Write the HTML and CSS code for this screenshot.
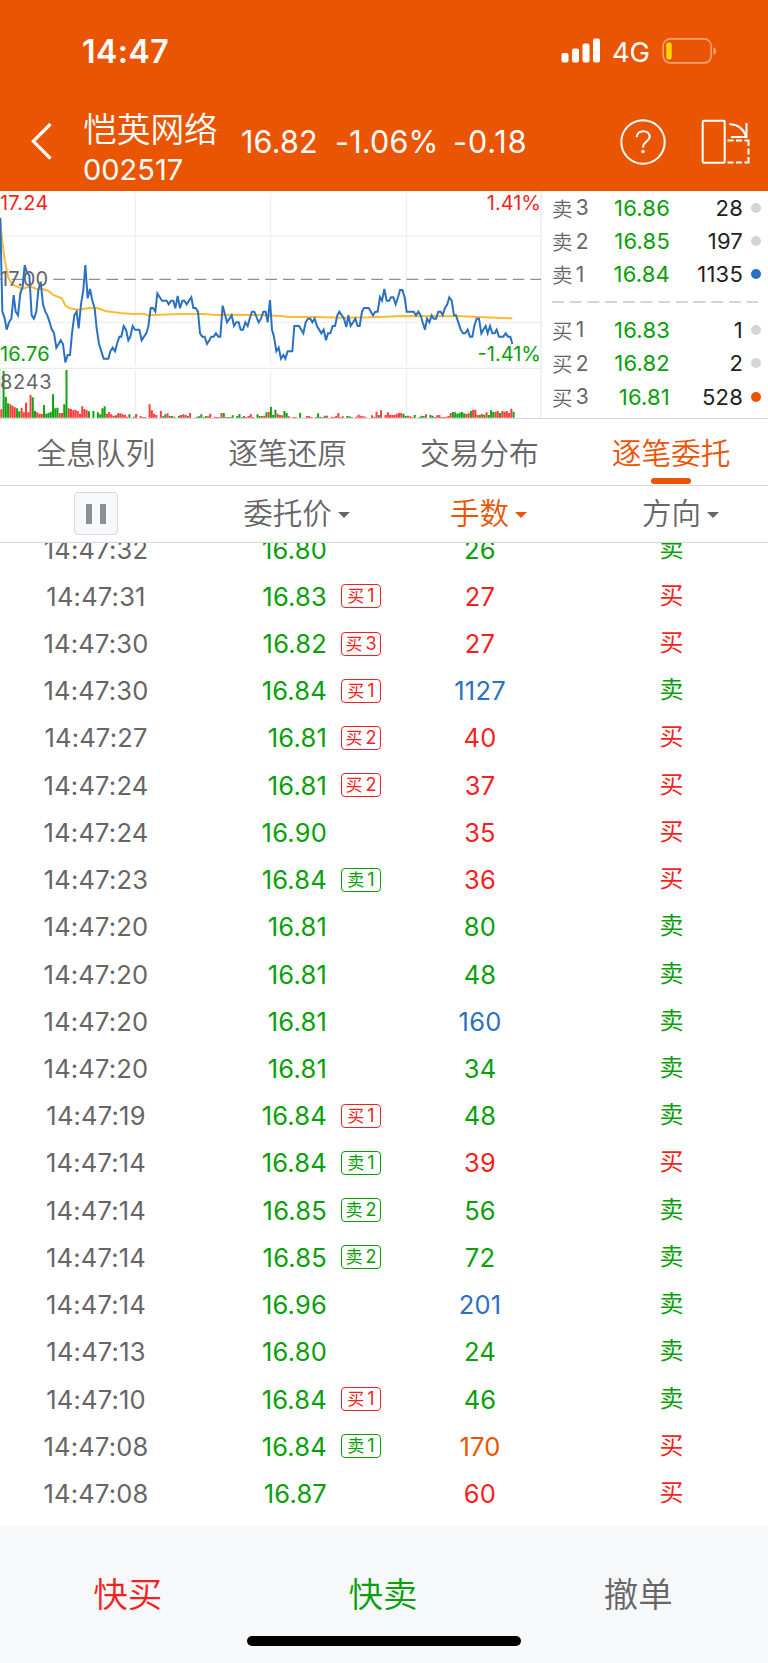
FILE: index.html
```html
<!DOCTYPE html>
<html lang="zh-CN">
<head>
<meta charset="utf-8">
<title>恺英网络 002517</title>
<link rel="stylesheet" href="styles.css">
</head>
<body>
<header class="top">
  <div class="status">
    <span class="clock">14:47</span>
    <svg class="signal" width="40" height="26" viewBox="0 0 40 26" fill="#fff"><rect x="0.5" y="15" width="7" height="9.5" rx="2"/><rect x="11" y="10.5" width="7" height="14" rx="2"/><rect x="21.5" y="5.5" width="7" height="19" rx="2"/><rect x="32" y="0.5" width="7" height="24" rx="2"/></svg>
    <span class="net">4G</span>
    <svg class="battery" width="56" height="28" viewBox="0 0 56 28"><rect x="1.2" y="1.9" width="48" height="24" rx="7" fill="none" stroke="#f5a273" stroke-width="1.6"/><rect x="4.3" y="5.5" width="5.4" height="17" rx="2" fill="#ffd60a"/><path d="M51.5 10v8q2.600-1 2.600-4t-2.600-4z" fill="#f5a273"/></svg>
  </div>
  <div class="nav">
    <svg class="back" width="24" height="38" viewBox="0 0 24 38" fill="none" stroke="#fff" stroke-width="3.200"><path d="M20.500 2 3.300 19.300 20.500 36.500"/></svg>
    <div class="stock"><div class="name">恺英网络</div><div class="code">002517</div></div>
    <div class="quote"><span class="q1">16.82</span><span class="q2">-1.06%</span><span class="q3">-0.18</span></div>
    <svg class="help" width="46" height="46" viewBox="0 0 46 46" fill="none" stroke="#fff" stroke-width="2"><circle cx="23" cy="23" r="21.700"/><path d="M16.700 18.300C16.700 10.400 29.700 10.200 29.700 17.700C29.700 22.400 23 22.300 23 28.500" stroke-width="2.100"/><circle cx="23" cy="32.500" r="1.700" fill="#fff" stroke="none"/></svg>
    <svg class="rotate" width="49" height="46" viewBox="0 0 49 46" fill="none" stroke="#fff" stroke-width="2"><rect x="1.700" y="1.700" width="22" height="42" rx="1.200"/><path d="M28.300 5q13.500.8 17 13.200M45.500 4v14H30"/><path d="M26.500 21.600h6m2.500 0h6m2.500 0h4v5.500m0 2.500v6m0 2.500v5.500h-4m-2.500 0h-6m-2.500 0h-6"/></svg>
  </div>
</header>
<section class="market">
  <div class="chart">
    <svg width="543" height="228" viewBox="0 0 1629 684" fill="none">
      <g transform="translate(0 -18)">
        <path d="M0 153H1623M0 412H1623M406 24V542M812 24V542M1219 24V542M406 555V698M812 555V698M1219 555V698" stroke="#eaebf1" stroke-width="3"/>
        <path d="M0 550H1623M1623 18V700M1 550V700" stroke="#e4e4ea" stroke-width="3"/>
        <path d="M160 283H1623" stroke="#8e8e93" stroke-width="4" stroke-dasharray="35 18"/>
        <path d="M0 283h8M35 283h38" stroke="#8e8e93" stroke-width="4"/>
        <path id="vr" stroke="#fa3e3c" stroke-width="6"/><path id="vg" stroke="#12a310" stroke-width="6"/>
        <path stroke="#ffb932" stroke-width="6" d="M1 110 7 170 14 225 25 278 36 298 50 304 66 312 90 304 110 312 130 313 146 318 160 330 185 340 197 362 210 370 232 374 270 369 295 370 315 378 360 384 400 387 430 386 445 391 480 389 540 387 610 387 650 390 700 389 780 390 840 393 870 396 940 396 1030 398 1110 397 1160 395 1210 393 1390 394 1450 397 1510 399 1537 400"/>
        <path stroke="#2b71c2" stroke-width="6" d="M1 98 3 200 7 380 14 400 20 434 27 412 34 401 41 330 47 380 54 391 61 325 68 305 74 240 80 261 88 271 95 391 102 401 109 380 115 315 122 290 129 358 136 380 142 391 149 412 155 432 162 444 169 488 176 477 182 466 189 477 196 532 203 510 210 510 216 445 223 391 230 380 236 430 243 358 250 315 256 240 263 340 270 312 277 347 284 370 290 430 297 477 304 499 311 521 325 521 331 499 338 488 345 499 351 477 358 455 364 455 371 423 378 434 385 466 391 455 398 423 405 434 418 434 425 466 432 455 439 445 445 425 452 369 459 369 466 380 472 325 486 347 500 347 506 358 513 347 520 347 526 370 533 333 540 370 547 347 553 347 560 358 567 347 574 337 580 369 587 369 594 380 600 445 607 455 614 455 621 477 628 466 634 455 641 455 648 445 655 455 661 455 668 362 681 412 695 391 702 423 709 412 716 412 722 434 729 434 736 412 743 423 749 401 756 380 763 380 776 412 783 401 790 380 797 380 803 412 810 345 816 434 822 455 829 499 836 488 843 521 850 510 856 521 863 499 877 499 883 423 897 423 910 445 917 412 924 401 931 401 937 412 944 401 951 423 964 445 971 434 978 466 984 445 991 445 998 423 1005 423 1012 391 1018 380 1032 401 1039 426 1045 391 1052 423 1066 401 1073 423 1079 423 1086 380 1092 369 1106 369 1119 391 1126 380 1133 380 1140 336 1146 347 1153 312 1160 347 1167 347 1173 337 1180 337 1187 358 1194 337 1200 315 1207 315 1214 337 1220 380 1241 380 1248 391 1255 380 1262 391 1268 412 1275 434 1281 401 1288 412 1295 391 1301 401 1308 401 1315 380 1322 380 1328 391 1335 369 1342 358 1348 337 1355 347 1362 391 1368 391 1382 434 1389 445 1396 445 1403 434 1410 455 1417 455 1423 423 1430 401 1437 401 1444 445 1450 434 1457 423 1463 445 1470 423 1477 445 1484 445 1490 434 1497 455 1510 455 1517 445 1524 455 1531 455 1537 477"/>
      </g>
    </svg>
    <span class="lab hi">17.24</span><span class="lab mid">17.00</span><span class="lab lo">16.76</span><span class="lab vol">8243</span>
    <span class="lab hip">1.41%</span><span class="lab lop">-1.41%</span>
  </div>
  <div class="book">
    <div class="lv"><span class="bk">卖<i>3</i></span><span class="bp">16.86</span><span class="bq">28</span><b class="dot"></b></div>
    <div class="lv"><span class="bk">卖<i>2</i></span><span class="bp">16.85</span><span class="bq">197</span><b class="dot"></b></div>
    <div class="lv"><span class="bk">卖<i>1</i></span><span class="bp">16.84</span><span class="bq">1135</span><b class="dot blue"></b></div>
    <svg class="dash" width="208" height="22"><path d="M0 11H206" stroke="#d3d5de" stroke-width="2" stroke-dasharray="12 5.700"/></svg>
    <div class="lv"><span class="bk">买<i>1</i></span><span class="bp">16.83</span><span class="bq">1</span><b class="dot"></b></div>
    <div class="lv"><span class="bk">买<i>2</i></span><span class="bp">16.82</span><span class="bq">2</span><b class="dot"></b></div>
    <div class="lv"><span class="bk">买<i>3</i></span><span class="bp">16.81</span><span class="bq">528</span><b class="dot orange"></b></div>
  </div>
</section>
<nav class="tabs"><span>全息队列</span><span>逐笔还原</span><span>交易分布</span><span class="on">逐笔委托</span></nav>
<div class="cols">
  <div><span class="pause"><i></i><i></i></span></div>
  <div class="c2">委托价<i class="tri"></i></div>
  <div class="c3">手数<i class="tri"></i></div>
  <div class="c4">方向<i class="tri"></i></div>
</div>
<main class="list">
  <div class="row"><span class="t">14:47:32</span><span class="p">16.80</span><span class="g"></span><span class="n dn">26</span><span class="s dn">卖</span></div>
  <div class="row"><span class="t">14:47:31</span><span class="p">16.83</span><span class="g"><em class="up">买<i>1</i></em></span><span class="n up">27</span><span class="s up">买</span></div>
  <div class="row"><span class="t">14:47:30</span><span class="p">16.82</span><span class="g"><em class="up">买<i>3</i></em></span><span class="n up">27</span><span class="s up">买</span></div>
  <div class="row"><span class="t">14:47:30</span><span class="p">16.84</span><span class="g"><em class="up">买<i>1</i></em></span><span class="n bl">1127</span><span class="s dn">卖</span></div>
  <div class="row"><span class="t">14:47:27</span><span class="p">16.81</span><span class="g"><em class="up">买<i>2</i></em></span><span class="n up">40</span><span class="s up">买</span></div>
  <div class="row"><span class="t">14:47:24</span><span class="p">16.81</span><span class="g"><em class="up">买<i>2</i></em></span><span class="n up">37</span><span class="s up">买</span></div>
  <div class="row"><span class="t">14:47:24</span><span class="p">16.90</span><span class="g"></span><span class="n up">35</span><span class="s up">买</span></div>
  <div class="row"><span class="t">14:47:23</span><span class="p">16.84</span><span class="g"><em class="dn">卖<i>1</i></em></span><span class="n up">36</span><span class="s up">买</span></div>
  <div class="row"><span class="t">14:47:20</span><span class="p">16.81</span><span class="g"></span><span class="n dn">80</span><span class="s dn">卖</span></div>
  <div class="row"><span class="t">14:47:20</span><span class="p">16.81</span><span class="g"></span><span class="n dn">48</span><span class="s dn">卖</span></div>
  <div class="row"><span class="t">14:47:20</span><span class="p">16.81</span><span class="g"></span><span class="n bl">160</span><span class="s dn">卖</span></div>
  <div class="row"><span class="t">14:47:20</span><span class="p">16.81</span><span class="g"></span><span class="n dn">34</span><span class="s dn">卖</span></div>
  <div class="row"><span class="t">14:47:19</span><span class="p">16.84</span><span class="g"><em class="up">买<i>1</i></em></span><span class="n dn">48</span><span class="s dn">卖</span></div>
  <div class="row"><span class="t">14:47:14</span><span class="p">16.84</span><span class="g"><em class="dn">卖<i>1</i></em></span><span class="n up">39</span><span class="s up">买</span></div>
  <div class="row"><span class="t">14:47:14</span><span class="p">16.85</span><span class="g"><em class="dn">卖<i>2</i></em></span><span class="n dn">56</span><span class="s dn">卖</span></div>
  <div class="row"><span class="t">14:47:14</span><span class="p">16.85</span><span class="g"><em class="dn">卖<i>2</i></em></span><span class="n dn">72</span><span class="s dn">卖</span></div>
  <div class="row"><span class="t">14:47:14</span><span class="p">16.96</span><span class="g"></span><span class="n bl">201</span><span class="s dn">卖</span></div>
  <div class="row"><span class="t">14:47:13</span><span class="p">16.80</span><span class="g"></span><span class="n dn">24</span><span class="s dn">卖</span></div>
  <div class="row"><span class="t">14:47:10</span><span class="p">16.84</span><span class="g"><em class="up">买<i>1</i></em></span><span class="n dn">46</span><span class="s dn">卖</span></div>
  <div class="row"><span class="t">14:47:08</span><span class="p">16.84</span><span class="g"><em class="dn">卖<i>1</i></em></span><span class="n or">170</span><span class="s up">买</span></div>
  <div class="row"><span class="t">14:47:08</span><span class="p">16.87</span><span class="g"></span><span class="n up">60</span><span class="s up">买</span></div>
</main>
<footer class="foot">
  <div class="acts"><span class="up">快买</span><span class="dn">快卖</span><span>撤单</span></div>
  <div class="home"></div>
</footer>
<script src="chart.js"></script>
</body>
</html>
```
FILE: styles.css
```css
* { box-sizing: border-box; }
body { margin: 0; width: 768px; height: 1663px; overflow: hidden; display: flex; flex-direction: column; background: #fff; color: #666; font-family: Inter, "Noto Sans CJK SC", sans-serif; font-weight: 400; white-space: nowrap; }
i, em, b { font-style: normal; font-weight: inherit; }
svg { display: block; flex: none; }
.up { color: #f81f20; }
.dn { color: #07a007; }
.bl { color: #2b71c2; }
.or { color: #ea5504; }

.top { height: 191px; flex: none; background: #ea5504; color: #fff; }
.status { height: 104px; display: flex; padding-left: 82px; }
.clock { width: 479px; margin-top: 32px; font-size: 32px; line-height: 39px; font-weight: 600; letter-spacing: .5px; }
.signal { margin-top: 38px; }
.net { margin: 36px 0 0 11px; width: 49px; font-size: 27.500px; line-height: 33px; letter-spacing: -.3px; }
.battery { margin-top: 37px; margin-left: 1px; }
.nav { display: flex; height: 87px; }
.back { margin: 18px 0 0 30px; }
.stock { width: 158px; margin-left: 29px; }
.name { font-size: 33.700px; line-height: 48px; margin-top: 2px; font-weight: 350; }
.code { font-size: 29px; line-height: 32px; }
.quote { display: flex; width: 379px; font-size: 30.500px; line-height: 36px; margin-top: 20px; letter-spacing: .2px; }
.q1 { width: 94px; }
.q2 { width: 118px; }
.q3 { letter-spacing: .9px; }
.help { margin-top: 15px; }
.rotate { margin: 15px 0 0 35px; }

.market { height: 228px; flex: none; display: flex; border-bottom: 1px solid #d6d7dd; }
.chart { width: 543px; position: relative; overflow: hidden; }
.lab { position: absolute; font-size: 20px; line-height: 24px; letter-spacing: .2px; }
.hi { left: 0; top: 0; color: #f81f20; }
.mid { left: 0; top: 76px; }
.lo { left: 0; top: 151px; color: #07a007; }
.vol { left: 0; top: 179px; letter-spacing: .7px; }
.hip { right: 2px; top: 0; color: #f81f20; letter-spacing: 0; }
.lop { right: 2px; top: 151px; color: #07a007; letter-spacing: 0; }
.book { flex: 1; padding-left: 9px; }
.lv { display: flex; align-items: center; height: 33.400px; font-size: 22px; letter-spacing: .2px; }
.bk { width: 59px; display: flex; align-items: center; font-size: 20.500px; font-weight: 350; }
.bk i { margin-left: 3px; font-size: 21px; font-weight: 400; }
.bp { width: 59px; color: #07a007; text-align: right; }
.bq { width: 73px; color: #222; text-align: right; }
.dot { width: 10px; height: 10px; border-radius: 50%; background: #d2d5da; margin-left: 8px; }
.blue { background: #2b71c2; }
.orange { background: #ea5504; }

.tabs { height: 67px; flex: none; display: grid; grid-template-columns: repeat(4, 1fr); border-bottom: 1px solid #d6d7dd; text-align: center; font-size: 29.700px; line-height: 68px; font-weight: 350; padding-right: 1px; }
.on { color: #ea5504; display: flex; flex-direction: column; align-items: center; position: relative; }
.on::after { content: ""; position: absolute; bottom: 3px; width: 40px; height: 6px; border-radius: 3px; background: #ea5504; }
.cols { height: 57px; flex: none; display: grid; grid-template-columns: repeat(4, 1fr); border-bottom: 1px solid #d6d7dd; font-size: 29.500px; font-weight: 350; line-height: 42px; padding-bottom: 1px; }
.cols > div { display: flex; align-items: center; justify-content: center; }
.cols .c2, .cols .c3, .cols .c4 { padding-left: 17px; padding-bottom: 1px; }
.cols .c3 { color: #ea5504; }
.tri { border: 6.500px solid transparent; border-top-color: currentColor; border-bottom-width: 0; margin-left: 6px; margin-top: 3px; }
.pause { width: 44px; height: 43px; border: 1px solid #d5dae0; border-radius: 4px; background: #f6f8fa; display: flex; gap: 8px; align-items: center; justify-content: center; }
.pause i { width: 6px; height: 20px; background: #8e8e93; }

.list { height: 983px; flex: none; overflow: hidden; }
.row { display: flex; align-items: center; height: 47.220px; font-size: 25.500px; letter-spacing: .2px; }
.row:first-child { margin-top: -17.500px; }
.t { width: 192px; text-align: center; }
.p { width: 135px; text-align: right; color: #07a007; }
.g { width: 57px; padding-left: 14px; display: flex; }
.g em { width: 40px; height: 24px; border: 1px solid currentColor; border-radius: 4px; display: flex; align-items: center; justify-content: center; gap: 3px; font-size: 17px; line-height: 20px; letter-spacing: 0; }
.g i { font-size: 18px; }
.n { width: 192px; text-align: center; }
.s { width: 191px; text-align: center; font-size: 24px; line-height: 34px; padding-bottom: 1px; }

.foot { flex: 1; background: #f6f8fa; }
.acts { display: grid; grid-template-columns: repeat(3, 1fr); text-align: center; font-size: 34.500px; font-weight: 350; line-height: 50px; padding: 44px 2px 0 0; }
.home { width: 274px; height: 10px; border-radius: 5px; background: #000; margin: 16px auto 0; }
```
FILE: chart.js
```js
// Volume per minute: r = up, g = down, followed by the bar height.
const volume = `r25 g140 g62 g43 r40 r36 r31 g28 g19 r30 r16 r45 r16 r68 g61 g20 r16 r12 r12 g38 g12 g14 g18 g70 g28 g30 r14 r14 g40
g143 r28 r26 r22 r24 r20 r12 r34 r26 r22 g19 r0 g20 r0 g16 g10 g28 g34 r12 r17 r10 r6 g7 r13 r13 r10 r9 r3 g10 r0
r3 r11 r0 r5 r2 r2 r0 r40 r22 r12 r8 r0 r20 g4 g10 r13 r5 g5 r3 r0 g6 r8 r10 r8 g5 r14 r0 r0 g3 g4
g10 r2 g5 r4 r12 r0 r3 r2 r2 r14 g14 r2 r2 g2 g7 r0 g5 g11 r2 g5 r2 r5 r11 r2 r0 g10 g5 r5 r6 g16
r17 g32 g8 g24 r12 r8 r7 g20 g14 r4 r0 r2 r2 r0 g14 r0 r0 r5 r5 r2 r0 r2 g13 g3 r2 g6 r6 r0 r3 r2
r6 r14 g2 r4 r0 g5 g4 r2 r0 r3 r9 r6 r4 r3 r0 r0 r7 r3 r18 g8 r22 r0 r8 r16 r9 r8 r8 r12 r14 r14
g12 g5 r6 r4 r2 g8 r0 r2 g6 g5 r10 r0 g8 g6 r2 r7 r8 r2 r2 r3 r5 r14 g17 g16 g12 g15 g17 g13 r11 r13
g20 r24 r24 r8 g9 r11 g9 r16 g8 g22 g17 r18 r20 g14 r20 r18 r20 r14 r27 g18`.split(/\s+/);
const paths = { r: "", g: "" };
volume.forEach((v, i) => {
  const h = +v.slice(1);
  if (h) paths[v[0]] += `M${(4 + i * 6.74).toFixed(1)} 698v-${h}`;
});
document.getElementById("vr").setAttribute("d", paths.r);
document.getElementById("vg").setAttribute("d", paths.g);
```
